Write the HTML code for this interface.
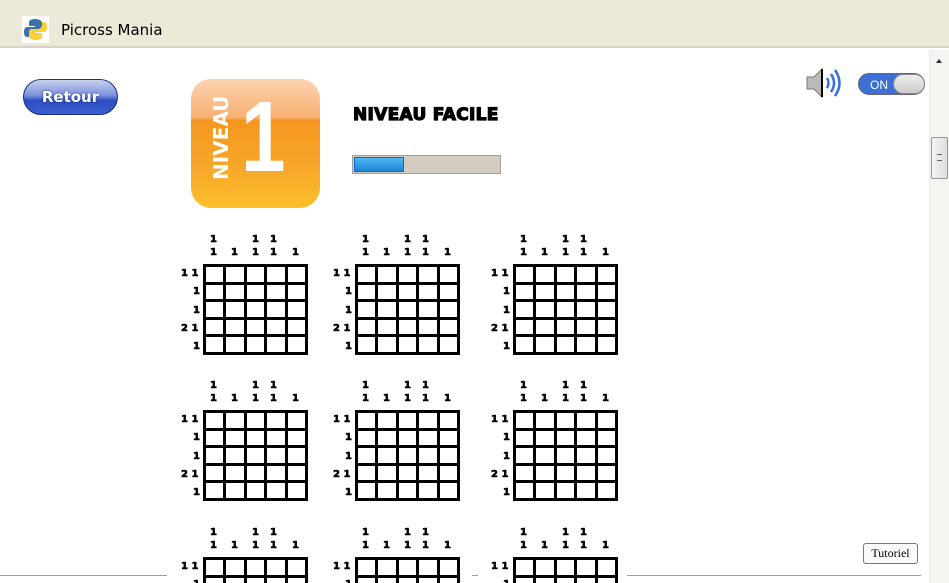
<!DOCTYPE html>
<html style="width:949px;height:583px;overflow:hidden"><head><meta charset="utf-8"><style>
*{margin:0;padding:0;box-sizing:border-box}
body{width:949px;height:583px;overflow:hidden;background:#fff;font-family:"Liberation Sans",sans-serif;position:relative}
#wrap{position:absolute;left:0;top:0;width:949px;height:583px;overflow:hidden}
.title{position:absolute;left:0;top:0;width:949px;height:48px;background:#ece9d8;border-bottom:2px solid #d6d3c4}
.title span{position:absolute;left:61px;top:21px;font-size:15px;color:#000;font-family:"DejaVu Sans",sans-serif}
.blk{position:absolute;width:140px;height:130px}
.g{position:absolute;left:22px;top:38px;width:105px;height:91px;background:#000;padding:3px;display:grid;grid-template-columns:repeat(5,1fr);grid-template-rows:repeat(5,1fr);gap:3px}
.g i{background:#fff}
.c{position:absolute;font:bold 10px "DejaVu Sans",sans-serif;color:#000;line-height:10px;-webkit-text-stroke:0.6px #000}
.sb{position:absolute;left:929px;top:50px;width:20px;height:533px;background:#f4f4f0;border-left:1px solid #e8e8e4}
</style></head><body><div id="wrap">
<div class="title">
<svg style="position:absolute;left:22px;top:16px" width="27" height="27" viewBox="0 0 27 27"><rect width="27" height="27" fill="#fff"/><path d="M13 3c-5 0-6 2-6 4v3h6v1H5c-2 0-3 2-3 5s1 5 3 5h2v-3c0-2 2-4 4-4h6c2 0 3-1 3-3V7c0-2-2-4-7-4z" fill="#3b73a8"/><path d="M14 24c5 0 6-2 6-4v-3h-6v-1h8c2 0 3-2 3-5s-1-5-3-5h-2v3c0 2-2 4-4 4h-6c-2 0-3 1-3 3v4c0 2 2 4 7 4z" fill="#f7d03a"/></svg>
<span>Picross Mania</span></div>

<div style="position:absolute;left:23px;top:79px;width:95px;height:36px;border-radius:18px;background:linear-gradient(#c8d2ef 0%,#7d92dc 45%,#2d4dc0 60%,#3a5ed0 100%);border:1px solid #1a2e80"><div style="position:absolute;left:0;right:0;top:8px;text-align:center;color:#fff;font:bold 15px 'DejaVu Sans',sans-serif;text-shadow:0 0 2px #1a2e80">Retour</div></div>

<div style="position:absolute;left:191px;top:79px;width:129px;height:129px;border-radius:20px;background:linear-gradient(#fbd3b0 0%,#f8b070 30%,#f49620 32%,#f8a82a 70%,#fbbf2d 100%);overflow:hidden">
<div style="position:absolute;left:18px;top:101px;transform:rotate(-90deg);transform-origin:0 0;color:#fff;font:bold 20px 'DejaVu Sans',sans-serif;width:80px">NIVEAU</div>
<div style="position:absolute;left:50px;top:8px;color:#fff;font:bold 100px 'Liberation Sans',sans-serif;line-height:100px;transform:scaleX(0.8);transform-origin:0 0">1</div></div>

<div style="position:absolute;left:353px;top:105px;font:bold 17px 'DejaVu Sans',sans-serif;color:#000;letter-spacing:0.3px;-webkit-text-stroke:1.2px #000">NIVEAU FACILE</div>
<div style="position:absolute;left:352px;top:155px;width:149px;height:19px;background:#d4ccc0;border:1px solid #a89f90"><div style="position:absolute;left:1px;top:1px;width:50px;height:15px;background:linear-gradient(#50b8f0,#1c86d8);border:1px solid #1060e0"></div></div>

<svg style="position:absolute;left:805px;top:65px" width="40" height="36" viewBox="0 0 40 36"><path d="M2 12h7l8-8v28l-8-8H2z" fill="#bbb" stroke="#777"/><path d="M17 4v28" stroke="#000" stroke-width="2"/><path d="M22 13q3 5 0 10M26 9q6 9 0 18M30 5q9 13 0 26" stroke="#3a6ee0" stroke-width="2.5" fill="none"/></svg>
<div style="position:absolute;left:858px;top:73px;width:67px;height:22px;border-radius:11px;background:#3e6fd6;border:1px solid #667"><span style="position:absolute;left:11px;top:4px;color:#fff;font-size:12px">ON</span><div style="position:absolute;left:34px;top:0;width:32px;height:20px;border-radius:10px;background:linear-gradient(#eee,#ccc);border:1px solid #888"></div></div>

<div class="sb"><div style="position:absolute;left:6px;top:6px;border:3px solid transparent;border-bottom:4px solid #333;width:0;height:0"></div><div style="position:absolute;left:1px;top:87px;width:17px;height:42px;border:1px solid #999;border-radius:2px;background:linear-gradient(90deg,#f4f4f4,#ddd)"><div style="position:absolute;left:5px;top:16px;width:5px;height:7px;border-top:1px solid #666;border-bottom:1px solid #666"></div></div></div>

<div style="position:absolute;left:0;top:575px;width:167px;height:1px;background:#8ea0b8"></div>
<div style="position:absolute;left:472px;top:575px;width:6px;height:1px;background:#8ea0b8"></div>
<div style="position:absolute;left:627px;top:575px;width:294px;height:1px;background:#8ea0b8"></div>
<div style="position:absolute;left:863px;top:543px;width:55px;height:21px;border:1px solid #777;border-radius:3px;background:#fafafa;font:12px 'Liberation Serif',serif;text-align:center;line-height:19px">Tutoriel</div>

<div class="blk" style="left:181px;top:226px">
<div class="c" style="left:29px;top:9px">1</div><div class="c" style="left:71px;top:9px">1</div><div class="c" style="left:89px;top:9px">1</div>
<div class="c" style="left:29px;top:22px">1</div><div class="c" style="left:50px;top:22px">1</div><div class="c" style="left:71px;top:22px">1</div><div class="c" style="left:89px;top:22px">1</div><div class="c" style="left:111px;top:22px">1</div>
<div class="c" style="left:0;top:43px">1 1</div><div class="c" style="left:12px;top:61px">1</div><div class="c" style="left:12px;top:80px">1</div><div class="c" style="left:0;top:98px">2 1</div><div class="c" style="left:12px;top:116px">1</div>
<div class="g"><i></i><i></i><i></i><i></i><i></i><i></i><i></i><i></i><i></i><i></i><i></i><i></i><i></i><i></i><i></i><i></i><i></i><i></i><i></i><i></i><i></i><i></i><i></i><i></i><i></i></div></div>
<div class="blk" style="left:333px;top:226px">
<div class="c" style="left:29px;top:9px">1</div><div class="c" style="left:71px;top:9px">1</div><div class="c" style="left:89px;top:9px">1</div>
<div class="c" style="left:29px;top:22px">1</div><div class="c" style="left:50px;top:22px">1</div><div class="c" style="left:71px;top:22px">1</div><div class="c" style="left:89px;top:22px">1</div><div class="c" style="left:111px;top:22px">1</div>
<div class="c" style="left:0;top:43px">1 1</div><div class="c" style="left:12px;top:61px">1</div><div class="c" style="left:12px;top:80px">1</div><div class="c" style="left:0;top:98px">2 1</div><div class="c" style="left:12px;top:116px">1</div>
<div class="g"><i></i><i></i><i></i><i></i><i></i><i></i><i></i><i></i><i></i><i></i><i></i><i></i><i></i><i></i><i></i><i></i><i></i><i></i><i></i><i></i><i></i><i></i><i></i><i></i><i></i></div></div>
<div class="blk" style="left:491px;top:226px">
<div class="c" style="left:29px;top:9px">1</div><div class="c" style="left:71px;top:9px">1</div><div class="c" style="left:89px;top:9px">1</div>
<div class="c" style="left:29px;top:22px">1</div><div class="c" style="left:50px;top:22px">1</div><div class="c" style="left:71px;top:22px">1</div><div class="c" style="left:89px;top:22px">1</div><div class="c" style="left:111px;top:22px">1</div>
<div class="c" style="left:0;top:43px">1 1</div><div class="c" style="left:12px;top:61px">1</div><div class="c" style="left:12px;top:80px">1</div><div class="c" style="left:0;top:98px">2 1</div><div class="c" style="left:12px;top:116px">1</div>
<div class="g"><i></i><i></i><i></i><i></i><i></i><i></i><i></i><i></i><i></i><i></i><i></i><i></i><i></i><i></i><i></i><i></i><i></i><i></i><i></i><i></i><i></i><i></i><i></i><i></i><i></i></div></div>

<div class="blk" style="left:181px;top:372px">
<div class="c" style="left:29px;top:9px">1</div><div class="c" style="left:71px;top:9px">1</div><div class="c" style="left:89px;top:9px">1</div>
<div class="c" style="left:29px;top:22px">1</div><div class="c" style="left:50px;top:22px">1</div><div class="c" style="left:71px;top:22px">1</div><div class="c" style="left:89px;top:22px">1</div><div class="c" style="left:111px;top:22px">1</div>
<div class="c" style="left:0;top:43px">1 1</div><div class="c" style="left:12px;top:61px">1</div><div class="c" style="left:12px;top:80px">1</div><div class="c" style="left:0;top:98px">2 1</div><div class="c" style="left:12px;top:116px">1</div>
<div class="g"><i></i><i></i><i></i><i></i><i></i><i></i><i></i><i></i><i></i><i></i><i></i><i></i><i></i><i></i><i></i><i></i><i></i><i></i><i></i><i></i><i></i><i></i><i></i><i></i><i></i></div></div>
<div class="blk" style="left:333px;top:372px">
<div class="c" style="left:29px;top:9px">1</div><div class="c" style="left:71px;top:9px">1</div><div class="c" style="left:89px;top:9px">1</div>
<div class="c" style="left:29px;top:22px">1</div><div class="c" style="left:50px;top:22px">1</div><div class="c" style="left:71px;top:22px">1</div><div class="c" style="left:89px;top:22px">1</div><div class="c" style="left:111px;top:22px">1</div>
<div class="c" style="left:0;top:43px">1 1</div><div class="c" style="left:12px;top:61px">1</div><div class="c" style="left:12px;top:80px">1</div><div class="c" style="left:0;top:98px">2 1</div><div class="c" style="left:12px;top:116px">1</div>
<div class="g"><i></i><i></i><i></i><i></i><i></i><i></i><i></i><i></i><i></i><i></i><i></i><i></i><i></i><i></i><i></i><i></i><i></i><i></i><i></i><i></i><i></i><i></i><i></i><i></i><i></i></div></div>
<div class="blk" style="left:491px;top:372px">
<div class="c" style="left:29px;top:9px">1</div><div class="c" style="left:71px;top:9px">1</div><div class="c" style="left:89px;top:9px">1</div>
<div class="c" style="left:29px;top:22px">1</div><div class="c" style="left:50px;top:22px">1</div><div class="c" style="left:71px;top:22px">1</div><div class="c" style="left:89px;top:22px">1</div><div class="c" style="left:111px;top:22px">1</div>
<div class="c" style="left:0;top:43px">1 1</div><div class="c" style="left:12px;top:61px">1</div><div class="c" style="left:12px;top:80px">1</div><div class="c" style="left:0;top:98px">2 1</div><div class="c" style="left:12px;top:116px">1</div>
<div class="g"><i></i><i></i><i></i><i></i><i></i><i></i><i></i><i></i><i></i><i></i><i></i><i></i><i></i><i></i><i></i><i></i><i></i><i></i><i></i><i></i><i></i><i></i><i></i><i></i><i></i></div></div>

<div class="blk" style="left:181px;top:519px">
<div class="c" style="left:29px;top:9px">1</div><div class="c" style="left:71px;top:9px">1</div><div class="c" style="left:89px;top:9px">1</div>
<div class="c" style="left:29px;top:22px">1</div><div class="c" style="left:50px;top:22px">1</div><div class="c" style="left:71px;top:22px">1</div><div class="c" style="left:89px;top:22px">1</div><div class="c" style="left:111px;top:22px">1</div>
<div class="c" style="left:0;top:43px">1 1</div><div class="c" style="left:12px;top:61px">1</div>
<div class="g"><i></i><i></i><i></i><i></i><i></i><i></i><i></i><i></i><i></i><i></i><i></i><i></i><i></i><i></i><i></i><i></i><i></i><i></i><i></i><i></i><i></i><i></i><i></i><i></i><i></i></div></div>
<div class="blk" style="left:333px;top:519px">
<div class="c" style="left:29px;top:9px">1</div><div class="c" style="left:71px;top:9px">1</div><div class="c" style="left:89px;top:9px">1</div>
<div class="c" style="left:29px;top:22px">1</div><div class="c" style="left:50px;top:22px">1</div><div class="c" style="left:71px;top:22px">1</div><div class="c" style="left:89px;top:22px">1</div><div class="c" style="left:111px;top:22px">1</div>
<div class="c" style="left:0;top:43px">1 1</div><div class="c" style="left:12px;top:61px">1</div>
<div class="g"><i></i><i></i><i></i><i></i><i></i><i></i><i></i><i></i><i></i><i></i><i></i><i></i><i></i><i></i><i></i><i></i><i></i><i></i><i></i><i></i><i></i><i></i><i></i><i></i><i></i></div></div>
<div class="blk" style="left:491px;top:519px">
<div class="c" style="left:29px;top:9px">1</div><div class="c" style="left:71px;top:9px">1</div><div class="c" style="left:89px;top:9px">1</div>
<div class="c" style="left:29px;top:22px">1</div><div class="c" style="left:50px;top:22px">1</div><div class="c" style="left:71px;top:22px">1</div><div class="c" style="left:89px;top:22px">1</div><div class="c" style="left:111px;top:22px">1</div>
<div class="c" style="left:0;top:43px">1 1</div><div class="c" style="left:12px;top:61px">1</div>
<div class="g"><i></i><i></i><i></i><i></i><i></i><i></i><i></i><i></i><i></i><i></i><i></i><i></i><i></i><i></i><i></i><i></i><i></i><i></i><i></i><i></i><i></i><i></i><i></i><i></i><i></i></div></div>
</div></body></html>
